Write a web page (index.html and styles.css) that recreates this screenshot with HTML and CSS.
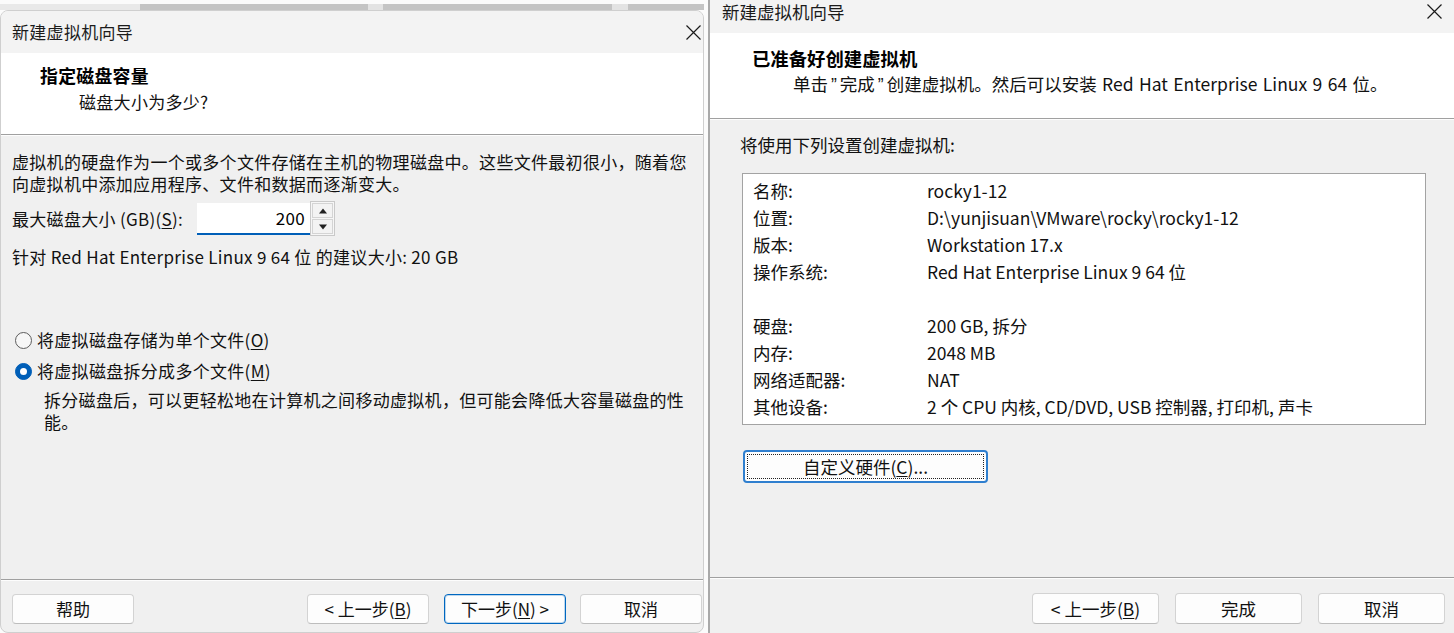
FILE: index.html
```html
<!DOCTYPE html>
<html>
<head>
    <meta charset="utf-8">
    <title>新建虚拟机向导</title>
    <link rel="stylesheet" href="styles.css">
</head>
<body>
<div class="stage">

    <!-- step: disk capacity -->
    <div class="col-left">
        <div class="behind"><div class="behind-bar"></div></div>
        <section class="wizard wizard-disk">
            <header class="titlebar">
                <span class="title">新建虚拟机向导</span>
                <button class="close" aria-label="关闭">
                    <svg width="15" height="15" viewBox="0 0 15 15"><path d="M0.5 0.5L14.5 14.5M14.5 0.5L0.5 14.5" stroke="#1b1b1b" stroke-width="1.2" fill="none"/></svg>
                </button>
            </header>
            <div class="banner">
                <h2>指定磁盘容量</h2>
                <p>磁盘大小为多少?</p>
            </div>
            <div class="etch"></div>
            <div class="content">
                <p class="intro">虚拟机的硬盘作为一个或多个文件存储在主机的物理磁盘中。这些文件最初很小，随着您<br>向虚拟机中添加应用程序、文件和数据而逐渐变大。</p>
                <div class="size-row">
                    <label for="disk-size">最大磁盘大小 (GB)(<u>S</u>):</label>
                    <div class="spin">
                        <input id="disk-size" type="text" value="200">
                        <div class="spin-btns">
                            <span class="spin-up"></span>
                            <span class="spin-down"></span>
                        </div>
                    </div>
                </div>
                <p class="hint">针对 Red Hat Enterprise Linux 9 64 位 的建议大小: 20 GB</p>
                <div class="radios">
                    <div class="radio-row">
                        <span class="radio"></span>
                        <span>将虚拟磁盘存储为单个文件(<u>O</u>)</span>
                    </div>
                    <div class="radio-row">
                        <span class="radio checked"></span>
                        <span>将虚拟磁盘拆分成多个文件(<u>M</u>)</span>
                    </div>
                    <p class="radio-note">拆分磁盘后，可以更轻松地在计算机之间移动虚拟机，但可能会降低大容量磁盘的性<br>能。</p>
                </div>
            </div>
            <div class="etch"></div>
            <footer class="buttons">
                <button class="btn">帮助</button>
                <span class="spacer"></span>
                <button class="btn">&lt; 上一步(<u>B</u>)</button>
                <button class="btn default">下一步(<u>N</u>) &gt;</button>
                <button class="btn">取消</button>
            </footer>
        </section>
    </div>

    <!-- step: ready to create -->
    <section class="wizard wizard-ready">
        <header class="titlebar">
            <span class="title">新建虚拟机向导</span>
            <button class="close" aria-label="关闭">
                <svg width="15" height="15" viewBox="0 0 15 15"><path d="M0.5 0.5L14.5 14.5M14.5 0.5L0.5 14.5" stroke="#1b1b1b" stroke-width="1.2" fill="none"/></svg>
            </button>
        </header>
        <div class="banner">
            <h2>已准备好创建虚拟机</h2>
            <p>单击<span class="q">&#8221;</span>完成<span class="q">&#8221;</span>创建虚拟机。然后可以安装 Red Hat Enterprise Linux 9 64 位。</p>
        </div>
        <div class="etch"></div>
        <div class="content">
            <p class="lead">将使用下列设置创建虚拟机:</p>
            <div class="summary">
                <span>名称:</span><span>rocky1-12</span>
                <span>位置:</span><span>D:\yunjisuan\VMware\rocky\rocky1-12</span>
                <span>版本:</span><span>Workstation 17.x</span>
                <span>操作系统:</span><span>Red Hat Enterprise Linux 9 64 位</span>
                <span></span><span></span>
                <span>硬盘:</span><span>200 GB, 拆分</span>
                <span>内存:</span><span>2048 MB</span>
                <span>网络适配器:</span><span>NAT</span>
                <span>其他设备:</span><span>2 个 CPU 内核, CD/DVD, USB 控制器, 打印机, 声卡</span>
            </div>
            <button class="btn custom">自定义硬件(<u>C</u>)...</button>
        </div>
        <div class="etch"></div>
        <footer class="buttons">
            <span class="spacer"></span>
            <button class="btn">&lt; 上一步(<u>B</u>)</button>
            <button class="btn">完成</button>
            <button class="btn">取消</button>
        </footer>
    </section>

</div>
</body>
</html>
```

FILE: styles.css
```css
* {
    box-sizing: border-box;
}

html, body {
    margin: 0;
    height: 100%;
}

body {
    background: #fbfbfb;
    font-family: "Noto Sans CJK SC", "Noto Sans", sans-serif;
    color: #111;
    overflow: hidden;
}

p, h2 {
    margin: 0;
}

u {
    text-underline-offset: 2px;
}

.stage {
    display: flex;
    height: 633px;
}

/* left column: the window peeking out above the first dialog */
.col-left {
    width: 704px;
    display: flex;
    flex-direction: column;
}

.behind {
    height: 10px;
    padding-top: 4px;
}

.behind-bar {
    height: 6px;
    background: linear-gradient(to right,
        #e9e9e9 0 140px,
        #c4c4c4 140px 368px,
        #e3e3e3 368px 383px,
        #c4c4c4 383px 612px,
        #e3e3e3 612px 628px,
        #c4c4c4 628px);
}

.wizard {
    display: flex;
    flex-direction: column;
    background: #f0f0f0;
    overflow: hidden;
}

.wizard-disk {
    flex: 1;
    font-size: 17px;
    letter-spacing: .3px;
    border: 1px solid #cfcfcf;
    border-radius: 8px;
}

.wizard-ready {
    flex: 1;
    margin-left: 4px;
    font-size: 17.5px;
    border-left: 2px solid #a9a9a9;
}

/* title bar */
.titlebar {
    display: flex;
    justify-content: space-between;
    background: #f3f3f3;
    color: #1b1b1b;
}

.wizard-disk .titlebar {
    height: 42px;
    align-items: center;
    padding: 0 2px 0 11px;
}

.wizard-ready .titlebar {
    height: 33px;
    align-items: flex-start;
    padding: 1px 12px 0 12px;
}

.title {
    line-height: 22px;
}

.close {
    border: none;
    background: none;
    padding: 0;
    width: 15px;
    height: 15px;
    display: flex;
}

.wizard-ready .close {
    margin-top: 3px;
}

/* white header with the step name */
.banner {
    background: #fff;
    line-height: 22px;
}

.banner h2 {
    font-weight: 700;
    font-size: 1.05em;
    color: #000;
}

.wizard-disk .banner {
    height: 81px;
    padding: 11px 0 0 39px;
}

.wizard-disk .banner p {
    margin-top: 5px;
    padding-left: 39px;
}

.wizard-ready .banner {
    height: 85px;
    padding: 14px 0 0 42px;
}

.wizard-ready .banner p {
    margin-top: 4px;
    padding-left: 41px;
    word-spacing: 1.5px;
}

/* narrow quotes around the button name */
.q {
    font-family: "Liberation Sans", sans-serif;
    padding: 0 3px;
}

.etch {
    height: 2px;
    border-top: 1px solid #a0a0a0;
    border-bottom: 1px solid #fdfdfd;
}

.content {
    flex: 1;
    line-height: 22px;
}

/* disk step */
.wizard-disk .content {
    padding: 15px 11px 0;
}

.size-row {
    display: flex;
    align-items: center;
    margin-top: 7px;
    height: 33px;
}

.size-row label {
    width: 185px;
    flex: none;
}

.spin {
    display: flex;
    align-items: center;
}

.spin input {
    width: 113px;
    height: 32px;
    border: none;
    border-bottom: 2px solid #005fb8;
    background: #fff;
    font: inherit;
    letter-spacing: .3px;
    text-align: right;
    padding: 0 5px 0 0;
    color: #000;
    outline: none;
}

.spin-btns {
    width: 25px;
    height: 35px;
    border: 1px solid #c9c9c9;
    padding: 1px;
    display: flex;
    flex-direction: column;
    gap: 1px;
    background: #f6f6f6;
}

.spin-btns span {
    flex: 1;
    border: 1px solid #d4d4d4;
    background: #f3f3f3;
    position: relative;
}

.spin-btns span::after {
    content: "";
    position: absolute;
    left: 50%;
    top: 50%;
    transform: translate(-50%, -50%);
    border-left: 4px solid transparent;
    border-right: 4px solid transparent;
}

.spin-up::after {
    border-bottom: 5px solid #222;
}

.spin-down::after {
    border-top: 5px solid #222;
}

.hint {
    margin-top: 11px;
}

.radios {
    margin-top: 61px;
}

.radio-row {
    display: flex;
    align-items: center;
    gap: 5px;
    height: 22px;
    padding-left: 3px;
}

.radio-row + .radio-row {
    margin-top: 9px;
}

.radio {
    width: 17px;
    height: 17px;
    border-radius: 50%;
    border: 1px solid #5d5d5d;
    background: #f7f7f7;
    position: relative;
}

.radio.checked {
    border-color: #005fb8;
    background: #005fb8;
}

.radio.checked::after {
    content: "";
    position: absolute;
    left: 4px;
    top: 4px;
    width: 7px;
    height: 7px;
    border-radius: 50%;
    background: #fff;
}

.radio-note {
    margin-top: 7px;
    padding-left: 32px;
}

/* ready step */
.wizard-ready .content {
    padding: 14px 0 0 30px;
}

.summary {
    margin: 17px 0 0 2px;
    width: 684px;
    height: 252px;
    border: 1px solid #a3a3a3;
    background: #fff;
    padding: 3px 0 0 10px;
    display: grid;
    grid-template-columns: 174px 1fr;
    grid-auto-rows: 27px;
    line-height: 27px;
}

/* buttons */
.btn {
    height: 30px;
    width: 122px;
    padding: 0;
    background: #fdfdfd;
    border: 1px solid #d3d3d3;
    border-bottom-color: #bdbdbd;
    border-radius: 4px;
    font: inherit;
    color: #111;
    line-height: 22px;
}

.btn.default {
    border: 1px solid #0067c0;
    box-shadow: inset 0 0 0 1px rgba(0, 103, 192, .25);
}

.btn.custom {
    display: block;
    margin: 25px 0 0 3px;
    width: 245px;
    height: 33px;
    border: 2px solid #2f7fcf;
    outline: 1px dotted #222;
    outline-offset: -5px;
}

.buttons {
    display: flex;
    align-items: flex-start;
}

.spacer {
    flex: 1;
}

.wizard-disk .buttons {
    height: 51px;
    padding: 13px 1px 0 11px;
}

.wizard-disk .buttons .btn + .btn {
    margin-left: 15px;
}

.wizard-disk .buttons .btn:last-child {
    margin-left: 14px;
}

.wizard-ready .buttons {
    height: 54px;
    padding: 14px 9px 0 0;
    gap: 16px;
}

.wizard-ready .buttons .btn {
    width: 127px;
    height: 31px;
}
```
